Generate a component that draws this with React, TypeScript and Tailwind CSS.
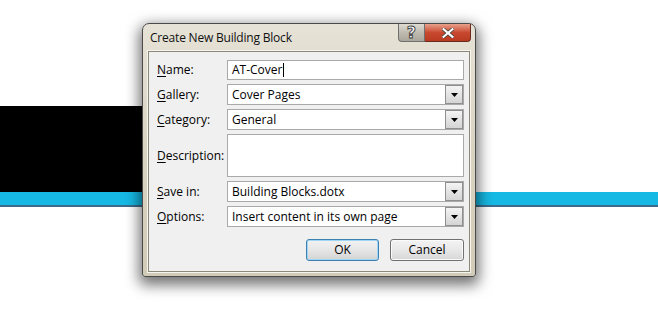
import React from 'react';

const font = { fontFamily: '"Segoe UI", "Open Sans", "Noto Sans", sans-serif' };

const Label = ({ k, rest }: { k: string; rest: string }) => (
  <span className="w-[70px] shrink-0 text-[12px] text-black">
    <span className="underline underline-offset-2">{k}</span>
    {rest}
  </span>
);

const Arrow = () => (
  <div className="flex h-full w-[18px] shrink-0 items-center justify-center border border-[#8e8f8f] bg-gradient-to-b from-[#f4f4f4] to-[#d4d4d4]">
    <svg width="7" height="4" viewBox="0 0 7 4">
      <path d="M0 0h7L3.5 4z" fill="#000" />
    </svg>
  </div>
);

const Select = ({ value }: { value: string }) => (
  <div className="flex h-[21px] flex-1 items-center border border-[#a9a9a9] bg-white">
    <span className="flex-1 pl-[4px] text-[12px] text-black">{value}</span>
    <Arrow />
  </div>
);

export default function App() {
  return (
    <div className="relative h-[315px] w-[658px] overflow-hidden bg-white" style={font}>
      {/* background slide */}
      <div className="flex flex-col">
        <div className="h-[106px]" />
        <div className="h-[86px]">
          <div className="h-full w-[150px] bg-black" />
        </div>
        <div className="h-[13px] bg-[#16b9e4]" />
        <div className="h-[2px] bg-[#3d6b8b]" />
      </div>

      {/* dialog window */}
      <div className="absolute left-[142px] top-[23px] flex h-[254px] w-[334px] flex-col rounded-t-[7px] rounded-b-[3px] border border-[#4a4a4a] bg-gradient-to-b from-[#e6e2d6] via-[#d9d3c2] to-[#d2cbb7] shadow-[0_5px_14px_3px_rgba(0,0,0,0.55)]">
        {/* title bar */}
        <div className="flex h-[27px] shrink-0 items-start justify-between pl-[7px] pr-[4px]">
          <span className="self-center text-[12px] tracking-[-0.2px] text-[#111]">Create New Building Block</span>
          <div className="flex">
            <div className="flex h-[18px] w-[27px] items-center justify-center rounded-bl-[4px] border border-t-0 border-[#6f6f6f] bg-gradient-to-b from-[#dedbd3] via-[#bfbbb1] to-[#aaa69b]">
              <span className="text-[16px] font-bold leading-none text-white [-webkit-text-stroke:0.9px_#3a3a3a]" style={{ fontFamily: '"DejaVu Sans", sans-serif' }}>?</span>
            </div>
            <div className="flex h-[18px] w-[46px] items-center justify-center rounded-br-[4px] border border-l-0 border-t-0 border-[#6a2a1e] bg-gradient-to-b from-[#e7a08c] via-[#c8492f] to-[#b83a22]">
              <svg width="12" height="10" viewBox="0 0 12 10">
                <path d="M1.5 1.2l9 7.6M10.5 1.2l-9 7.6" stroke="#3a3a3a" strokeWidth="3.6" strokeLinecap="square" />
                <path d="M1.5 1.2l9 7.6M10.5 1.2l-9 7.6" stroke="#fff" strokeWidth="2.2" strokeLinecap="square" />
              </svg>
            </div>
          </div>
        </div>

        {/* client area */}
        <div className="mx-[5px] mb-[4px] flex flex-1 flex-col border border-[#8c8878] bg-[#f0f0f0] pl-[8px] pr-[5px] pt-[8px] shadow-[0_0_0_1px_#f6f4ee]">
          <div className="flex flex-col gap-[4px]">
            <div className="flex h-[20px] items-center">
              <Label k="N" rest="ame:" />
              <div className="flex h-full flex-1 items-center border border-[#a9a9a9] bg-white pl-[4px] text-[12px] text-black">
                AT-Cover<span className="ml-[1px] h-[14px] w-[1px] bg-black" />
              </div>
            </div>
            <div className="flex items-center">
              <Label k="G" rest="allery:" />
              <Select value="Cover Pages" />
            </div>
            <div className="flex items-center">
              <Label k="C" rest="ategory:" />
              <Select value="General" />
            </div>
            <div className="flex h-[43px] items-center">
              <Label k="D" rest="escription:" />
              <div className="h-full flex-1 border border-[#a9a9a9] bg-white" />
            </div>
            <div className="flex items-center">
              <Label k="S" rest="ave in:" />
              <Select value="Building Blocks.dotx" />
            </div>
            <div className="flex items-center">
              <Label k="O" rest="ptions:" />
              <Select value="Insert content in its own page" />
            </div>
          </div>

          <div className="mt-[12px] flex justify-end gap-[11px]">
            <button className="h-[22px] w-[73px] rounded-[3px] border border-[#3c7fb1] bg-gradient-to-b from-[#f2f2f2] via-[#e6e6e6] to-[#d3d3d3] text-[12px] text-black shadow-[inset_0_0_0_1px_#9fd5f5]">
              OK
            </button>
            <button className="h-[22px] w-[74px] rounded-[3px] border border-[#707070] bg-gradient-to-b from-[#f3f3f3] via-[#e8e8e8] to-[#d6d6d6] text-[12px] text-black shadow-[inset_0_0_0_1px_#fbfbfb]">
              Cancel
            </button>
          </div>
        </div>
      </div>
    </div>
  );
}
